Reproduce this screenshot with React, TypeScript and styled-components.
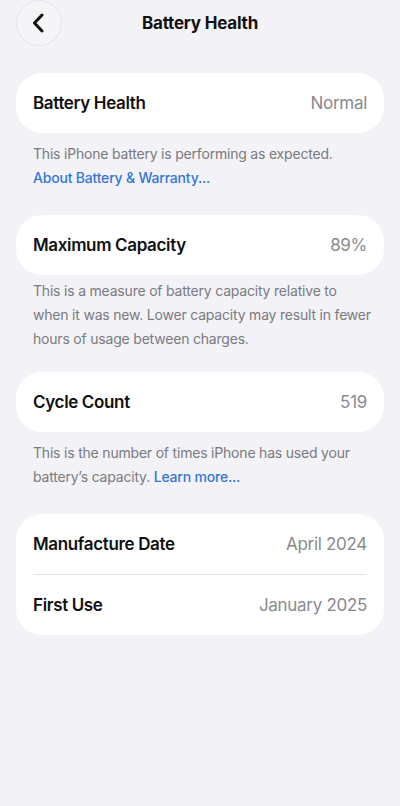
import React from "react";
import styled, { createGlobalStyle } from "styled-components";

const GlobalStyle = createGlobalStyle`
  html, body {
    margin: 0;
    padding: 0;
    background: #f2f2f7;
    font-family: Inter, "Noto Sans", sans-serif;
    -webkit-font-smoothing: antialiased;
  }
`;

const Page = styled.div`
  width: 400px;
  min-height: 806px;
  background: #f2f2f7;
  box-sizing: border-box;
  padding: 0 16px;
`;

const Header = styled.div`
  position: relative;
  height: 73px;
  display: flex;
  justify-content: center;
`;

const BackButton = styled.button`
  position: absolute;
  left: 0;
  top: 0;
  width: 46px;
  height: 46px;
  border-radius: 50%;
  border: 1px solid #e3e3e8;
  background: #f5f5f8;
  display: flex;
  align-items: center;
  justify-content: center;
  padding: 0;
`;

const Title = styled.h1`
  margin: 0;
  padding-top: 13px;
  font-size: 17px;
  font-weight: 700;
  color: #111;
  letter-spacing: -0.2px;
`;

const Card = styled.div`
  background: #fff;
  border-radius: 26px;
  padding: 0 17px;
`;

const Row = styled.div`
  height: 60px;
  display: flex;
  align-items: center;
  justify-content: space-between;
  font-size: 17px;
  letter-spacing: -0.3px;
`;

const Divider = styled.div`
  height: 1px;
  background: #e4e4e8;
`;

const Label = styled.span`
  color: #111;
  font-weight: 600;
  letter-spacing: -0.35px;
`;

const Value = styled.span`
  color: #8a8a8e;
  font-weight: 400;
`;

const Footer = styled.p<{ $compact?: boolean }>`
  margin: 0;
  padding: ${(p) => (p.$compact ? "4px 13px 21px 17px" : "9px 13px 25px 17px")};
  font-size: 14px;
  line-height: 24px;
  color: #7a7a7f;
  letter-spacing: -0.2px;
`;

const Link = styled.span`
  color: #3577d4;
  font-weight: 500;
`;

const BackIcon = () => (
  <svg width="16" height="20" viewBox="0 0 16 20">
    <path d="M11 2 L3.5 10 L11 18" fill="none" stroke="#111" strokeWidth="3" strokeLinecap="round" strokeLinejoin="round" />
  </svg>
);

export default function App() {
  return (
    <>
      <GlobalStyle />
      <Page>
        <Header>
          <BackButton aria-label="Back">
            <BackIcon />
          </BackButton>
          <Title>Battery Health</Title>
        </Header>

        <Card>
          <Row>
            <Label>Battery Health</Label>
            <Value>Normal</Value>
          </Row>
        </Card>
        <Footer>
          This iPhone battery is performing as expected.
          <br />
          <Link>About Battery &amp; Warranty...</Link>
        </Footer>

        <Card>
          <Row>
            <Label>Maximum Capacity</Label>
            <Value>89%</Value>
          </Row>
        </Card>
        <Footer $compact>
          This is a measure of battery capacity relative to when it was new. Lower capacity may result in fewer hours of usage between charges.
        </Footer>

        <Card>
          <Row>
            <Label>Cycle Count</Label>
            <Value>519</Value>
          </Row>
        </Card>
        <Footer>
          This is the number of times iPhone has used your battery’s capacity. <Link>Learn more...</Link>
        </Footer>

        <Card>
          <Row>
            <Label>Manufacture Date</Label>
            <Value>April 2024</Value>
          </Row>
          <Divider />
          <Row>
            <Label>First Use</Label>
            <Value>January 2025</Value>
          </Row>
        </Card>
      </Page>
    </>
  );
}
